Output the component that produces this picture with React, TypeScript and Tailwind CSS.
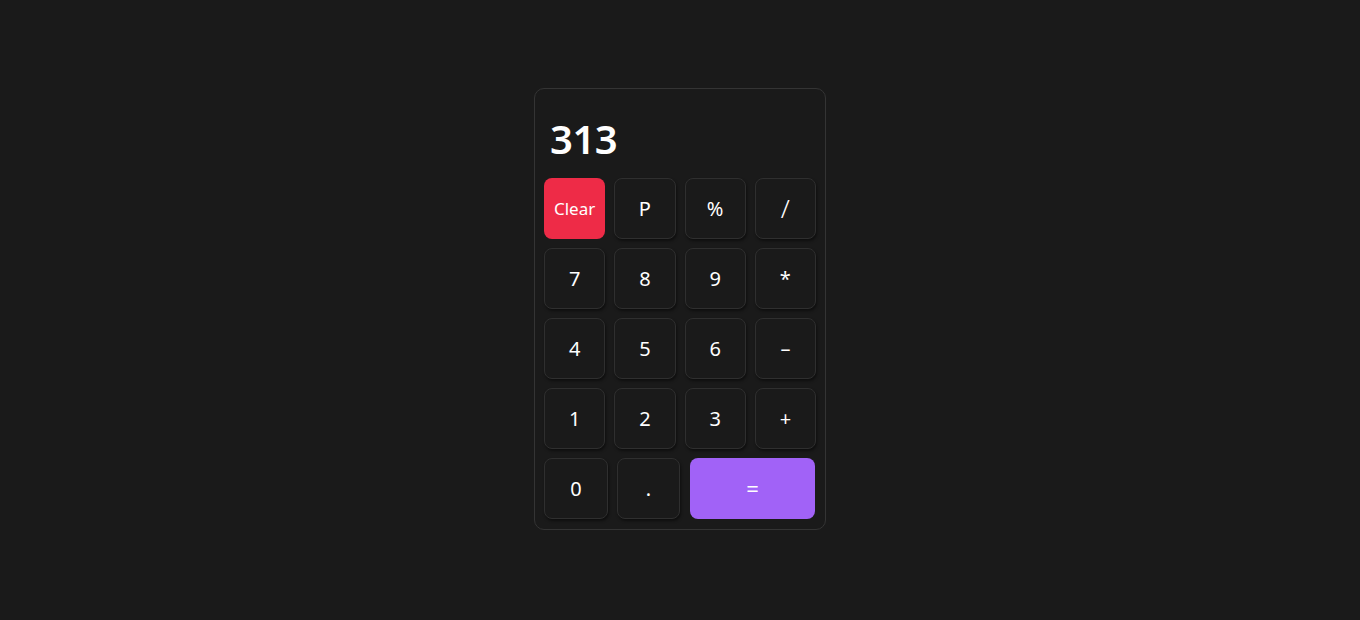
import React from "react";

const btn =
  "flex items-center justify-center h-[61px] rounded-[8px] border border-[#2f2f2f] bg-[#1a1a1a] text-white text-[20px] shadow-[1px_2px_3px_rgba(0,0,0,0.45)]";

export default function App() {
  const rows = [
    ["7", "8", "9", "*"],
    ["4", "5", "6", "-"],
    ["1", "2", "3", "+"],
  ];
  return (
    <div
      className="w-[1360px] h-[620px] bg-[#1a1a1a] flex justify-center pt-[88px]"
      style={{ fontFamily: '"Noto Sans", "Open Sans", sans-serif' }}
    >
      <div className="w-[292px] h-[442px] rounded-[10px] border border-[#343434] bg-[#1a1a1a] px-[9px] pb-[9px] flex flex-col">
        <div className="h-[89px] flex items-center pl-[6px] pt-[10px] text-white text-[40px] font-semibold tracking-[-0.5px]">
          313
        </div>
        <div className="flex flex-col gap-[9px]">
          <div className="grid grid-cols-4 gap-[9px]">
            <div className="flex items-center justify-center h-[61px] rounded-[8px] bg-[#ee2b47] text-white text-[17px]">
              Clear
            </div>
            <div className={btn}>P</div>
            <div className={btn}>%</div>
            <div className={btn + " !text-[26px] font-light"}>/</div>
          </div>
          {rows.map((r, i) => (
            <div key={i} className="grid grid-cols-4 gap-[9px]">
              {r.map((k) => (
                <div key={k} className={btn}>
                  {k === "-" ? "–" : k}
                </div>
              ))}
            </div>
          ))}
          <div className="flex gap-[9px]">
            <div className={btn + " w-[64px]"}>0</div>
            <div className={btn + " w-[63px]"}>.</div>
            <div className="ml-[1px] flex items-center justify-center h-[61px] w-[125px] rounded-[8px] bg-[#a162f7] text-white text-[22px]">
              =
            </div>
          </div>
        </div>
      </div>
    </div>
  );
}
